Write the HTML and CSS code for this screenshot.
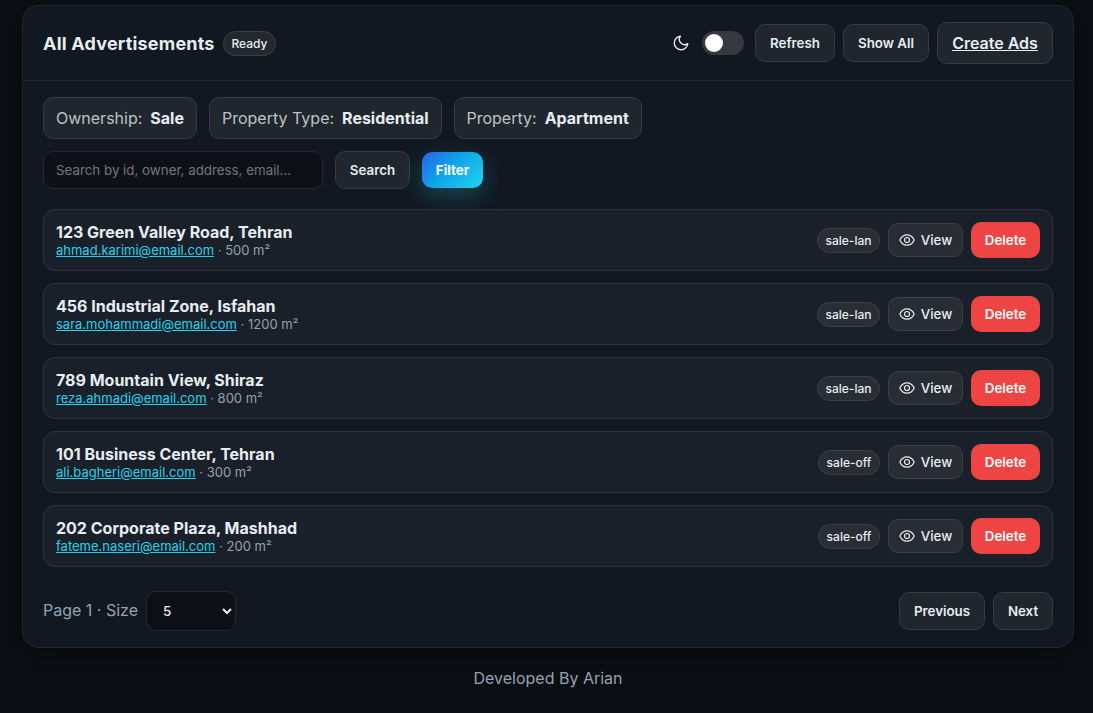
FILE: index.html
```html
<!DOCTYPE html>
<html lang="en">
<head>
<meta charset="utf-8">
<title>All Advertisements</title>
<link rel="stylesheet" href="styles.css">
</head>
<body>
<svg width="0" height="0" class="sprite">
  <symbol id="eye" viewBox="0 0 16 16" fill="none" stroke="currentColor" stroke-width="1.2" stroke-linecap="round" stroke-linejoin="round"><path d="M.8 8C2.4 4.6 4.9 2.8 8 2.8S13.600 4.600 15.200 8C13.600 11.400 11.100 13.200 8 13.200S2.400 11.400.8 8z"/><circle cx="8" cy="8" r="2.500"/></symbol>
</svg>
<main class="card">
  <header class="card-header">
    <div class="heading"><h1 class="title">All Advertisements</h1><span class="chip ready">Ready</span></div>
    <div class="actions">
      <svg class="moon" viewBox="0 0 24 24" fill="none" stroke="currentColor" stroke-width="1.8" stroke-linecap="round" stroke-linejoin="round"><path d="M21 12.79A9 9 0 1 1 11.21 3 7 7 0 0 0 21 12.79z"/></svg>
      <span class="switch" role="switch" aria-checked="false"><span class="knob"></span></span>
      <button class="btn refresh">Refresh</button>
      <button class="btn show-all">Show All</button>
      <a class="btn create" href="#">Create Ads</a>
    </div>
  </header>
  <div class="card-body">
    <div class="pills">
      <div class="pill own">Ownership: <strong>Sale</strong></div>
      <div class="pill type">Property Type: <strong>Residential</strong></div>
      <div class="pill prop">Property: <strong>Apartment</strong></div>
    </div>
    <div class="search-row">
      <input class="search" placeholder="Search by id, owner, address, email...">
      <button class="btn search-btn">Search</button>
      <button class="filter">Filter</button>
    </div>
    <div class="list">
      <article class="row">
        <div class="info"><div class="address">123 Green Valley Road, Tehran</div><div class="meta"><a href="#">ahmad.karimi@email.com</a> · 500 m²</div></div>
        <div class="row-actions"><span class="chip lan">sale-lan</span><button class="view"><svg class="eye"><use href="#eye"/></svg>View</button><button class="delete">Delete</button></div>
      </article>
      <article class="row">
        <div class="info"><div class="address">456 Industrial Zone, Isfahan</div><div class="meta"><a href="#">sara.mohammadi@email.com</a> · 1200 m²</div></div>
        <div class="row-actions"><span class="chip lan">sale-lan</span><button class="view"><svg class="eye"><use href="#eye"/></svg>View</button><button class="delete">Delete</button></div>
      </article>
      <article class="row">
        <div class="info"><div class="address">789 Mountain View, Shiraz</div><div class="meta"><a href="#">reza.ahmadi@email.com</a> · 800 m²</div></div>
        <div class="row-actions"><span class="chip lan">sale-lan</span><button class="view"><svg class="eye"><use href="#eye"/></svg>View</button><button class="delete">Delete</button></div>
      </article>
      <article class="row">
        <div class="info"><div class="address">101 Business Center, Tehran</div><div class="meta"><a href="#">ali.bagheri@email.com</a> · 300 m²</div></div>
        <div class="row-actions"><span class="chip off">sale-off</span><button class="view"><svg class="eye"><use href="#eye"/></svg>View</button><button class="delete">Delete</button></div>
      </article>
      <article class="row">
        <div class="info"><div class="address">202 Corporate Plaza, Mashhad</div><div class="meta"><a href="#">fateme.naseri@email.com</a> · 200 m²</div></div>
        <div class="row-actions"><span class="chip off">sale-off</span><button class="view"><svg class="eye"><use href="#eye"/></svg>View</button><button class="delete">Delete</button></div>
      </article>
    </div>
    <div class="pager">
      <div class="page-size"><span>Page 1 · Size</span><select class="size"><option>5</option><option>10</option><option>20</option></select></div>
      <div class="page-nav"><button class="btn previous">Previous</button><button class="btn next">Next</button></div>
    </div>
  </div>
</main>
<footer class="credit">Developed By Arian</footer>
</body>
</html>
```
FILE: styles.css
```css
* { box-sizing: border-box; }
body {
  margin: 0;
  height: 713px;
  overflow: hidden;
  padding: 5px 19px 0 22px;
  background: #0b0e13;
  color: #e6edf3;
  font: 16px/1.2 Inter, sans-serif;
}
button, input, select { font-family: inherit; margin: 0; }
.sprite { position: absolute; }
.card {
  width: 1052px;
  height: 643px;
  border: 1px solid #20262e;
  border-radius: 16px;
  background: #111821;
  box-shadow: 0 10px 30px rgba(0, 0, 0, .35);
}
.card-header {
  display: flex;
  align-items: center;
  justify-content: space-between;
  height: 75px;
  padding: 0 20px;
  border-bottom: 1px solid #20262e;
}
.heading, .actions, .row-actions, .page-size, .page-nav { display: flex; align-items: center; gap: 8px; }
.title { width: 172px; margin: 0; padding-top: 1px; font-size: 18px; line-height: 22px; font-weight: 700; letter-spacing: .2px; white-space: nowrap; }
.chip {
  display: inline-flex;
  align-items: center;
  justify-content: center;
  height: 25px;
  padding-top: 2px;
  border: 1px solid #3b4047;
  border-radius: 13px;
  background: #292e36;
  font-size: 12px;
  font-weight: 500;
}
.ready { width: 53px; background: #23282f; }
.lan { width: 63px; }
.off { width: 62px; }
.moon { width: 18px; height: 18px; margin-right: 4px; }
.switch { width: 42px; height: 24px; margin-right: 3px; padding: 3px; border-radius: 12px; background: #35393f; }
.knob { display: block; width: 18px; height: 18px; border-radius: 50%; background: #fff; }
.btn {
  display: flex;
  align-items: center;
  justify-content: center;
  height: 38px;
  padding: 0;
  border: 1px solid #363a42;
  border-radius: 10px;
  background: #20262d;
  color: #e6edf3;
  font-size: 13.333px;
  font-weight: 600;
}
.refresh { width: 80px; }
.show-all { width: 86px; }
.create { width: 116px; height: 42px; padding-top: 2px; font-size: 16px; }
.card-body { padding: 16px 20px; }
.pills { display: flex; gap: 12px; }
.pill {
  display: flex;
  align-items: center;
  gap: 8px;
  height: 42px;
  padding: 2px 12px 0;
  border: 1px solid #363a42;
  border-radius: 10px;
  background: #20262d;
  color: #bdc2c8;
  white-space: nowrap;
}
.pill strong { color: #e6edf3; font-weight: 700; }
.own { width: 154px; }
.type { width: 233px; }
.prop { width: 188px; padding-left: 11.5px; }
.search-row { display: flex; align-items: center; gap: 12px; margin-top: 12px; }
.search {
  width: 280px;
  height: 38px;
  padding: 0 12px;
  border: 1px solid #25292f;
  border-radius: 10px;
  background: #0d1117;
  color: #e6edf3;
  font-size: 13.333px;
}
.search::placeholder { color: #757575; }
.search-btn { width: 75px; }
.filter {
  width: 61px;
  height: 36px;
  padding: 0;
  border: 0;
  border-radius: 10px;
  background: linear-gradient(135deg, #2563eb, #0ea5e9 45%, #22d3ee);
  box-shadow: 0 8px 24px rgba(34, 211, 238, .25);
  color: #fff;
  font-size: 13.333px;
  font-weight: 700;
}
.list { display: grid; gap: 12px; margin-top: 20px; }
.row {
  display: flex;
  align-items: center;
  justify-content: space-between;
  height: 62px;
  padding: 0 12px;
  border: 1px solid #2e333b;
  border-radius: 12px;
  background: #1a2029;
}
.address { font-weight: 700; line-height: 19px; }
.meta { color: #94a3a9; font-size: 13px; line-height: 16px; }
.meta a { color: #22d3ee; }
.view {
  display: flex;
  align-items: center;
  justify-content: center;
  gap: 6px;
  width: 75px;
  height: 34px;
  padding: 0;
  border: 1px solid #3b3f47;
  border-radius: 10px;
  background: #282c34;
  color: #e6edf3;
  font-size: 13.333px;
  font-weight: 500;
}
.eye { width: 16px; height: 16px; }
.delete {
  width: 69px;
  height: 36px;
  padding: 0;
  border: 0;
  border-radius: 10px;
  background: #ef4444;
  color: #fff;
  font-size: 13.333px;
  font-weight: 600;
}
.pager { display: flex; align-items: center; justify-content: space-between; height: 40px; margin-top: 24px; }
.page-size { color: #94a3b0; }
.size {
  width: 90px;
  height: 40px;
  padding: 0 0 0 12px;
  border: 1px solid #25292f;
  border-radius: 10px;
  background: #0d1117;
  color: #e6edf3;
  font-size: 13.333px;
  font-weight: 500;
}
.previous { width: 86px; }
.next { width: 60px; }
.credit { padding-top: 20px; text-align: center; color: #94a3b0; line-height: 20px; }
```
